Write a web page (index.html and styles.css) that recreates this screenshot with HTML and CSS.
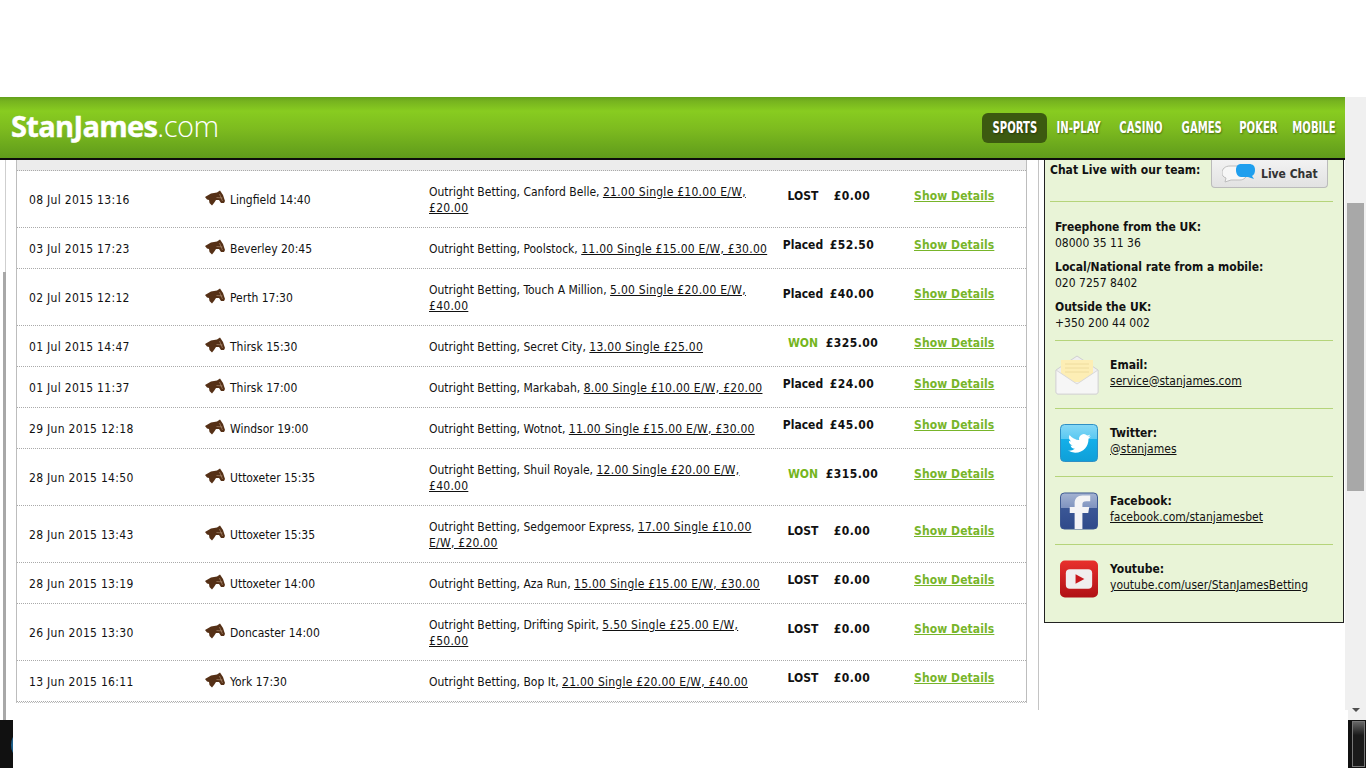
FILE: index.html
```html
<!DOCTYPE html>
<html lang="en">
<head>
<meta charset="utf-8">
<title>Stan James</title>
<link rel="stylesheet" href="styles.css">
</head>
<body>
<div class="top-gap"></div>
<div class="window">
  <div class="app">
    <header class="masthead">
      <div class="logo"><b>StanJames</b><span>.com</span></div>
      <nav class="nav">
        <a class="active"><span>SPORTS</span></a><a><span>IN-PLAY</span></a><a><span>CASINO</span></a><a><span>GAMES</span></a><a><span>POKER</span></a><a><span>MOBILE</span></a>
      </nav>
    </header>
    <div class="content">
      <div class="left-rule"></div>
      <main class="history">
        <div class="band"></div>
        <div class="row tall"><div class="c-date">08 Jul 2015 13:16</div><div class="c-event"><svg class="horse" viewBox="0 0 20 16"><use href="#horse"/></svg>Lingfield 14:40</div><div class="c-bet">Outright Betting, Canford Belle, <u>21.00 Single £10.00 E/W, £20.00</u></div><div class="c-res">LOST</div><div class="c-amt">£0.00</div><a class="c-link">Show Details</a></div>
        <div class="row"><div class="c-date">03 Jul 2015 17:23</div><div class="c-event"><svg class="horse" viewBox="0 0 20 16"><use href="#horse"/></svg>Beverley 20:45</div><div class="c-bet">Outright Betting, Poolstock, <u>11.00 Single £15.00 E/W, £30.00</u></div><div class="c-res">Placed</div><div class="c-amt">£52.50</div><a class="c-link">Show Details</a></div>
        <div class="row tall"><div class="c-date">02 Jul 2015 12:12</div><div class="c-event"><svg class="horse" viewBox="0 0 20 16"><use href="#horse"/></svg>Perth 17:30</div><div class="c-bet">Outright Betting, Touch A Million, <u>5.00 Single £20.00 E/W, £40.00</u></div><div class="c-res">Placed</div><div class="c-amt">£40.00</div><a class="c-link">Show Details</a></div>
        <div class="row"><div class="c-date">01 Jul 2015 14:47</div><div class="c-event"><svg class="horse" viewBox="0 0 20 16"><use href="#horse"/></svg>Thirsk 15:30</div><div class="c-bet">Outright Betting, Secret City, <u>13.00 Single £25.00</u></div><div class="c-res won">WON</div><div class="c-amt">£325.00</div><a class="c-link">Show Details</a></div>
        <div class="row"><div class="c-date">01 Jul 2015 11:37</div><div class="c-event"><svg class="horse" viewBox="0 0 20 16"><use href="#horse"/></svg>Thirsk 17:00</div><div class="c-bet">Outright Betting, Markabah, <u>8.00 Single £10.00 E/W, £20.00</u></div><div class="c-res">Placed</div><div class="c-amt">£24.00</div><a class="c-link">Show Details</a></div>
        <div class="row"><div class="c-date">29 Jun 2015 12:18</div><div class="c-event"><svg class="horse" viewBox="0 0 20 16"><use href="#horse"/></svg>Windsor 19:00</div><div class="c-bet">Outright Betting, Wotnot, <u>11.00 Single £15.00 E/W, £30.00</u></div><div class="c-res">Placed</div><div class="c-amt">£45.00</div><a class="c-link">Show Details</a></div>
        <div class="row tall"><div class="c-date">28 Jun 2015 14:50</div><div class="c-event"><svg class="horse" viewBox="0 0 20 16"><use href="#horse"/></svg>Uttoxeter 15:35</div><div class="c-bet">Outright Betting, Shuil Royale, <u>12.00 Single £20.00 E/W, £40.00</u></div><div class="c-res won">WON</div><div class="c-amt">£315.00</div><a class="c-link">Show Details</a></div>
        <div class="row tall"><div class="c-date">28 Jun 2015 13:43</div><div class="c-event"><svg class="horse" viewBox="0 0 20 16"><use href="#horse"/></svg>Uttoxeter 15:35</div><div class="c-bet">Outright Betting, Sedgemoor Express, <u>17.00 Single £10.00 E/W, £20.00</u></div><div class="c-res">LOST</div><div class="c-amt">£0.00</div><a class="c-link">Show Details</a></div>
        <div class="row"><div class="c-date">28 Jun 2015 13:19</div><div class="c-event"><svg class="horse" viewBox="0 0 20 16"><use href="#horse"/></svg>Uttoxeter 14:00</div><div class="c-bet">Outright Betting, Aza Run, <u>15.00 Single £15.00 E/W, £30.00</u></div><div class="c-res">LOST</div><div class="c-amt">£0.00</div><a class="c-link">Show Details</a></div>
        <div class="row tall"><div class="c-date">26 Jun 2015 13:30</div><div class="c-event"><svg class="horse" viewBox="0 0 20 16"><use href="#horse"/></svg>Doncaster 14:00</div><div class="c-bet">Outright Betting, Drifting Spirit, <u>5.50 Single £25.00 E/W, £50.00</u></div><div class="c-res">LOST</div><div class="c-amt">£0.00</div><a class="c-link">Show Details</a></div>
        <div class="row"><div class="c-date">13 Jun 2015 16:11</div><div class="c-event"><svg class="horse" viewBox="0 0 20 16"><use href="#horse"/></svg>York 17:30</div><div class="c-bet">Outright Betting, Bop It, <u>21.00 Single £20.00 E/W, £40.00</u></div><div class="c-res">LOST</div><div class="c-amt">£0.00</div><a class="c-link">Show Details</a></div>
      </main>
      <div class="divider"></div>
      <aside class="contact">
        <div class="chat"><b>Chat Live with our team:</b>
          <a class="chat-btn"><svg class="bubbles" viewBox="0 0 34 19"><path d="M8 2h10c5 0 7 3 7 7s-3 7-7 7H9l-6 2 1-4C1 13 0 11 0 9c0-4 3-7 8-7z" fill="#f7f7f7" stroke="#bdbdbd"/><path d="M19 0h8c4 0 6 2 6 6 0 3-1 5-3 6l2 3-6-2h-7c-3 0-5-3-5-7s2-6 5-6z" fill="#1f9fee"/></svg>Live Chat</a>
        </div>
        <div class="phones">
          <p><b>Freephone from the UK:</b><br>08000 35 11 36</p>
          <p><b>Local/National rate from a mobile:</b><br>020 7257 8402</p>
          <p><b>Outside the UK:</b><br>+350 200 44 002</p>
        </div>
        <div class="social">
          <svg class="ico mail" viewBox="0 0 44 40"><path d="M1 15 22 1l21 14v22a2 2 0 0 1-2 2H3a2 2 0 0 1-2-2z" fill="#efefef" stroke="#d0d0d0"/><path d="M6 5h32v22H6z" fill="#fdeeb5"/><path d="M10 9h24M10 13h24M10 17h24" stroke="#eedc9e"/><path d="M1 15l21 14 21-14v22a2 2 0 0 1-2 2H3a2 2 0 0 1-2-2z" fill="#f6f6f6" stroke="#d8d8d8"/></svg>
          <div><b>Email:</b><br><u>service@stanjames.com</u></div>
        </div>
        <div class="social">
          <svg class="ico" viewBox="0 0 38 38"><defs><linearGradient id="tw" x1="0" y1="0" x2="0" y2="1"><stop offset="0" stop-color="#86d8f6"/><stop offset=".38" stop-color="#5bc9f2"/><stop offset=".38" stop-color="#14b0ea"/><stop offset="1" stop-color="#0f9fd8"/></linearGradient></defs><rect x=".5" y=".5" width="37" height="37" rx="4" fill="url(#tw)" stroke="#2f8fc4"/><g transform="translate(8 8) scale(.95)"><path d="M23.953 4.57a10 10 0 01-2.825.775 4.958 4.958 0 002.163-2.723c-.951.555-2.005.959-3.127 1.184a4.92 4.92 0 00-8.384 4.482C7.69 8.095 4.067 6.13 1.64 3.162a4.822 4.822 0 00-.666 2.475c0 1.71.87 3.213 2.188 4.096a4.904 4.904 0 01-2.228-.616v.06a4.923 4.923 0 003.946 4.827 4.996 4.996 0 01-2.212.085 4.936 4.936 0 004.604 3.417 9.867 9.867 0 01-6.102 2.105c-.39 0-.779-.023-1.17-.067a13.995 13.995 0 007.557 2.209c9.053 0 13.998-7.496 13.998-13.985 0-.21 0-.42-.015-.63A9.935 9.935 0 0024 4.59z" fill="#fff"/></g></svg>
          <div><b>Twitter:</b><br><u>@stanjames</u></div>
        </div>
        <div class="social">
          <svg class="ico" viewBox="0 0 39 38"><defs><linearGradient id="fb" x1="0" y1="0" x2="0" y2="1"><stop offset="0" stop-color="#a4b3d2"/><stop offset=".42" stop-color="#7f93bf"/><stop offset=".42" stop-color="#3b5796"/><stop offset="1" stop-color="#2f4a8a"/></linearGradient></defs><rect x=".5" y=".5" width="38" height="37" rx="4" fill="url(#fb)" stroke="#3a5590"/><path d="M15 37.500V21h-5v-6h5v-4c0-5 3-8 8-8h8v6h-4c-3 0-4 1-4 3v3h7l-1 6h-6v16.500z" fill="#f4f4f6"/></svg>
          <div><b>Facebook:</b><br><u>facebook.com/stanjamesbet</u></div>
        </div>
        <div class="social last">
          <svg class="ico" viewBox="0 0 39 38"><defs><linearGradient id="yt" x1="0" y1="0" x2="0" y2="1"><stop offset="0" stop-color="#e8302c"/><stop offset="1" stop-color="#b01015"/></linearGradient></defs><rect width="39" height="38" rx="5" fill="url(#yt)"/><rect x="6" y="9" width="27" height="20" rx="4" fill="#f0eeee"/><path d="M16 14l9 5-9 5z" fill="#c8161c"/></svg>
          <div><b>Youtube:</b><br><u>youtube.com/user/StanJamesBetting</u></div>
        </div>
      </aside>
    </div>
  </div>
  <div class="scrollbar"><div class="thumb"></div><div class="arrow"></div></div>
</div>
<div class="taskbar"><div class="task-left"><i class="orb"></i></div><div class="task-right"><i class="task-btn"></i></div></div>
<svg class="defs" aria-hidden="true"><defs><symbol id="horse" viewBox="0 0 20 16"><path d="M0 7 6 3.500 12 2.500 15 .5l1 1.500 2 3 2 6-1 2h-3l-2-3h-3l-2 3-2 2.500L4.500 13 4 10l-2-.5z" fill="#553016"/><path d="M14.500 4l3 7M11.500 7.500l6 .5" stroke="#c9a98c" stroke-width=".5" fill="none"/></symbol></defs></svg>
</body>
</html>
```
FILE: styles.css
```css
* { box-sizing: border-box; }
html, body { margin: 0; height: 768px; overflow: hidden; background: #fff; }
body { font: 12px/16px "DejaVu Sans Condensed", "DejaVu Sans", sans-serif; font-stretch: condensed; color: #111; }
.top-gap { height: 97px; }
.window { display: flex; height: 623px; }
.app { width: 1345px; display: flex; flex-direction: column; }
.masthead { height: 63px; flex: none; border-bottom: 2px solid #0c0c0c; display: flex; justify-content: space-between; align-items: center; padding: 0 2px 0 11px;
  background: linear-gradient(#62a01c 0, #76b31f 4px, #88cc20 14px, #7dbb1f 32px, #5f9b1b 100%); }
.logo { color: #fff; font: 29px/32px "Open Sans", sans-serif; margin-top: -3px; }
.logo b { font-weight: 700; letter-spacing: -.67px; -webkit-text-stroke: .4px #fff; }
.logo span { font-weight: 300; letter-spacing: -.5px; }
.nav { display: flex; align-items: center; }
.nav a { color: #fff; font: 700 16px/30px "DejaVu Sans Condensed", sans-serif; display: flex; justify-content: center; white-space: nowrap; text-shadow: 1px 1px 2px rgba(0,0,0,.4); }
.nav a span { display: inline-block; transform: scaleX(.7); }
.nav a:nth-child(1) { width: 65px; }
.nav a:nth-child(2) { width: 63px; }
.nav a:nth-child(3) { width: 61px; }
.nav a:nth-child(4) { width: 61px; }
.nav a:nth-child(5) { width: 52px; }
.nav a:nth-child(6) { width: 59px; }
.nav a.active { background: #3c5a10; border-radius: 6px; }
.content { flex: 1; display: flex; align-items: flex-start; position: relative; padding-left: 16px; min-height: 0; }
.left-rule { position: absolute; left: 5px; top: 0; bottom: 0; width: 1px; background: #cfcfcf; }
.left-rule::after { content: ""; position: absolute; left: -2px; top: 112px; bottom: 0; width: 3px; background: #a8a8a8; }
.history { width: 1011px; flex: none; height: 543px; border: 1px solid #bdbdbd; border-top: 0; border-bottom-style: dotted; background: #fff; }
.band { height: 11px; background: #ececec; border-bottom: 1px dotted #aaa; }
.row { height: 41px; border-bottom: 1px dotted #aaa; display: flex; align-items: center; position: relative; }
.row.tall { height: 57px; }
.c-date { width: 176px; padding-left: 12px; padding-top: 2px; letter-spacing: .3px; }
.c-event { width: 236px; display: flex; align-items: center; padding-left: 12px; padding-top: 2px; }
.horse { width: 20px; height: 16px; margin-right: 5px; margin-top: -4px; }
.c-bet { width: 345px; padding-top: 1px; }
.c-bet u { letter-spacing: .26px; }
.c-res { width: 58px; text-align: center; font-weight: 700; margin-top: -6px; }
.c-res.won { color: #74b51d; }
.c-amt { width: 62px; text-align: center; font-weight: 700; margin-top: -6px; margin-left: -11px; letter-spacing: .5px; }
.c-link { color: #78b52a; font-weight: 700; text-decoration: underline; margin-left: 31px; margin-top: -6px; letter-spacing: .1px; }
.divider { width: 1px; height: 550px; margin-left: 11px; background: #c4c4c4; flex: none; }
.contact { width: 300px; height: 463px; margin-left: 5px; flex: none; background: #e9f4d7; border: 1px solid #222; border-top: 0; padding: 0 10px; }
.chat { height: 42px; border-bottom: 1px solid #b5d47a; display: flex; justify-content: space-between; margin-left: -5px; padding-left: 0; }
.chat > b { line-height: 20px; }
.chat-btn { width: 117px; height: 28px; margin-right: 5px; background: linear-gradient(#f2f2f2, #e2e2e2); border: 1px solid #bbb; border-top: 0; border-radius: 0 0 4px 4px; display: flex; align-items: center; gap: 5px; padding-left: 10px; font-weight: 700; color: #333; }
.bubbles { width: 34px; height: 19px; }
.phones { padding-top: 17px; height: 139px; border-bottom: 1px solid #b5d47a; }
.phones p { margin: 0 0 8px; }
.social { height: 68px; border-bottom: 1px solid #b5d47a; display: flex; align-items: center; }
.social.last { border: 0; }
.social > div { margin-left: 12px; margin-top: -4px; }
.ico { width: 38px; height: 38px; margin-left: 5px; }
.ico.mail { width: 44px; height: 40px; margin-left: 0; margin-right: -1px; }
.scrollbar { width: 21px; background: #f0f0f0; position: relative; }
.scrollbar::after { content: ""; position: absolute; left: 0; bottom: 0; width: 3px; height: 10px; background: #fff; }
.thumb { position: absolute; left: 2px; right: 2px; top: 106px; height: 288px; background: #a8a8a8; }
.arrow { position: absolute; left: 7px; bottom: 8px; border: 4px solid transparent; border-top: 4px solid #505050; border-bottom: 0; }
.taskbar { display: flex; justify-content: space-between; height: 48px; }
.task-left { width: 13px; background: #111; position: relative; overflow: hidden; }
.orb { position: absolute; left: 11px; top: 15px; width: 10px; height: 20px; border-radius: 50%; background: #1d5f8a; }
.task-right { width: 18px; background: #111; padding: 1px 1px 1px 4px; }
.task-btn { display: block; height: 100%; border: 1px solid #777; background: linear-gradient(#666, #1a1a1a 30%); }
.defs { position: absolute; width: 0; height: 0; }
```
